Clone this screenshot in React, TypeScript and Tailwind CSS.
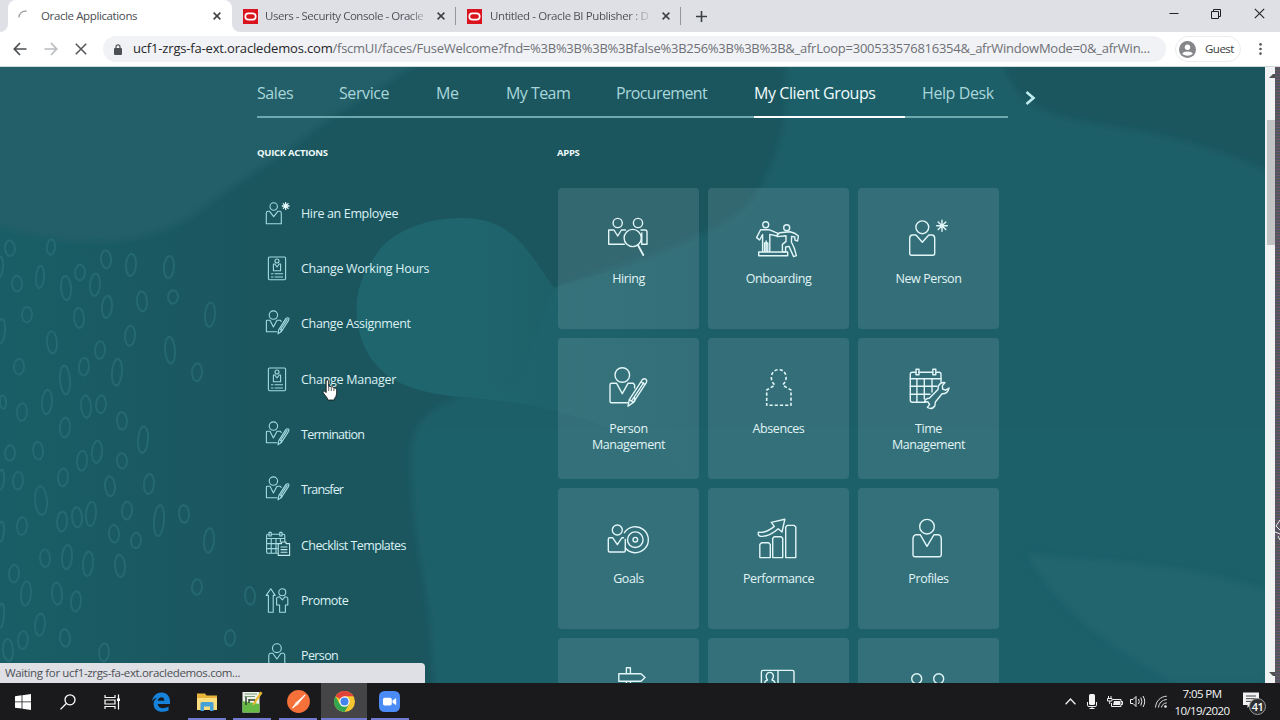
import React from 'react';

type IconProps = { className?: string };

interface QuickAction {
  label: string;
  icon: React.FC;
  tracking: string;
}

interface AppTile {
  lines: string[];
  icon: React.FC;
}

/* ---------- wallpaper ---------- */

// [cx, cy, rx, ry]
const SEEDS: number[][] = [
  [10, 230, 5, 7], [51, 229, 4, 7], [0, 247, 3, 9], [106, 240, 5, 8], [131, 245, 5, 10], [169, 247, 5, 10],
  [17, 262, 5, 7], [40, 256, 4, 10], [80, 252, 5, 7], [66, 266, 5, 11], [95, 263, 5, 10], [173, 274, 5, 6],
  [142, 278, 5, 9], [107, 283, 5, 10], [27, 290, 5, 7], [79, 293, 5, 9], [210, 290, 5, 11], [1, 305, 4, 11],
  [52, 315, 5, 10], [130, 309, 5, 9], [100, 322, 5, 8], [170, 322, 5, 12], [19, 337, 5, 7], [84, 337, 5, 8],
  [65, 349, 5, 13], [117, 342, 5, 12], [197, 342, 5, 8], [3, 369, 3, 6], [47, 369, 5, 11], [22, 378, 5, 8],
  [86, 373, 5, 10], [101, 371, 5, 8], [65, 392, 5, 9], [122, 386, 5, 8], [143, 403, 5, 12], [10, 415, 5, 7],
  [38, 413, 5, 8], [82, 422, 5, 9], [97, 414, 5, 10], [122, 422, 5, 7], [18, 440, 5, 8], [63, 437, 5, 8],
  [110, 445, 5, 9], [149, 443, 5, 9], [1, 439, 3, 9], [41, 458, 6, 13], [127, 467, 5, 8], [62, 477, 5, 9],
  [77, 473, 5, 9], [91, 470, 5, 11], [159, 476, 5, 14], [184, 470, 5, 8], [22, 481, 5, 8], [1, 486, 3, 9],
  [114, 488, 5, 8], [136, 494, 5, 7], [209, 494, 5, 11], [45, 510, 5, 8], [67, 509, 5, 11], [88, 515, 5, 11],
  [120, 517, 5, 10], [14, 524, 5, 8], [26, 542, 5, 11], [57, 542, 5, 10], [76, 549, 5, 9], [197, 536, 5, 7],
  [250, 544, 5, 8], [1, 562, 3, 11], [40, 570, 5, 10], [65, 582, 5, 8], [23, 584, 5, 8], [230, 582, 5, 7],
  [8, 593, 5, 10], [104, 595, 5, 8],
];

const Wallpaper: React.FC = () => (
  <svg className="absolute inset-0 h-full w-full" viewBox="0 67 1265 616" preserveAspectRatio="none" fill="none">
    <defs>
      <linearGradient id="base" x1="0" y1="0" x2="1" y2="0">
        <stop offset="0" stopColor="#195e66" />
        <stop offset="0.2" stopColor="#1b565f" />
        <stop offset="1" stopColor="#1b565f" />
      </linearGradient>
      <linearGradient id="right" x1="0" y1="0" x2="0" y2="1">
        <stop offset="0" stopColor="#1e5e67" />
        <stop offset="1" stopColor="#1f616a" />
      </linearGradient>
      <linearGradient id="bulb" gradientUnits="userSpaceOnUse" x1="480" y1="0" x2="700" y2="0">
        <stop offset="0" stopColor="#1f656d" />
        <stop offset="1" stopColor="#1f656d" stopOpacity="0" />
      </linearGradient>
      <filter id="soft" x="-5%" y="-5%" width="110%" height="110%">
        <feGaussianBlur stdDeviation="3" />
      </filter>
    </defs>
    <rect y="67" width="1265" height="616" fill="url(#base)" />
    <g filter="url(#soft)">
      <path d="M-10 50H430C395 85 350 100 303 139C270 165 240 180 205 207C165 237 125 243 86 242C50 241 20 234 -10 224Z" fill="#205f68" />
      <path
        d="M785 50C790 115 782 165 745 208C700 245 620 262 554 290L520 385L460 397C425 410 411 430 411 455C411 500 416 534 422 570C430 613 434 650 434 700H1290V182C1235 155 1190 138 1100 125C1050 115 1010 110 1000 50Z"
        fill="url(#right)"
      />
    </g>
    <path
      d="M462 218C425 218 390 232 376 255C352 285 352 322 366 350C382 380 410 392 460 397C540 402 620 420 700 480V240C660 262 600 272 554 288C530 255 515 218 462 218Z"
      fill="url(#bulb)"
    />
    <path d="M1027 554C1100 562 1180 562 1265 590V683H1175C1125 655 1060 615 1027 554Z" fill="#21656e" filter="url(#soft)" />
    <g transform="matrix(1 0 0 1.107 0 -6.4)">
      {SEEDS.map(([cx, cy, rx, ry], i) => (
        <ellipse
          key={i}
          cx={cx}
          cy={cy}
          rx={rx}
          ry={ry}
          transform={`rotate(${i % 3 === 0 ? -5 : 5} ${cx} ${cy})`}
          stroke="#2f7780"
          strokeWidth="2"
          opacity="0.5"
        />
      ))}
    </g>
  </svg>
);

/* ---------- app tile icons ---------- */

const TileSvg: React.FC<{ children: React.ReactNode }> = ({ children }) => (
  <svg
    className="h-[49px] w-[49px] shrink-0"
    viewBox="0 0 49 49"
    fill="none"
    stroke="#e2f6f8"
    strokeWidth="1.4"
    strokeLinejoin="round"
    strokeLinecap="round"
  >
    {children}
  </svg>
);

const HiringIcon: React.FC = () => (
  <TileSvg>
    <circle cx="13.7" cy="8" r="4.6" />
    <circle cx="34" cy="8" r="4.6" />
    <path d="M20.3 29.3H4.7V15H10L13.7 21L17.4 15H21.5" />
    <path d="M37 15H41Q43 15 43 17V29.3H37.6M37.8 18V29" />
    <circle cx="28.7" cy="23" r="8.6" />
    <path d="M34 30.3L39.3 40" strokeWidth="1.8" />
  </TileSvg>
);

const OnboardingIcon: React.FC = () => (
  <TileSvg>
    <circle cx="11.7" cy="9.7" r="3" />
    <path d="M8.6 36.5V19.5L5.6 25L2.6 22.6L6.6 14.8H15.6L24 18.4L23 21L15.8 19.4V36.5M12.2 36.5V26M10.6 36.5V28L13.8 28V36.5" />
    <path d="M4.7 37H33.7V40.7H4.7Z" />
    <circle cx="32.7" cy="12.8" r="3" />
    <path d="M23.4 20L25.5 17.8L36 16.8Q41 17.6 44.4 21L43.6 26L41 25.2L40.8 22L37.6 21.4L37.4 27L40.2 33L42.4 40.6L39.6 41.6L35 31.4L31.6 32V36.8H28.4V29.4L32 26.4V20.8L23.4 21.6" />
  </TileSvg>
);

const NewPersonIcon: React.FC = () => (
  <TileSvg>
    <circle cx="18.3" cy="12.3" r="6.4" />
    <path d="M12 20L18.3 27.3L24.8 20H28.5Q30.7 20.5 30.7 23.5V38.5Q30.7 40.3 28.8 40.3H7.6Q5.7 40.3 5.7 38.5V23.5Q5.7 20.5 8 20Z" />
    <path d="M38 5.2V16.2M32.6 10.7H43.4M34.2 6.9L41.8 14.5M41.8 6.9L34.2 14.5" />
  </TileSvg>
);

const PersonManagementIcon: React.FC = () => (
  <TileSvg>
    <circle cx="18.3" cy="10" r="7.3" />
    <path d="M23.5 37.7H7.2Q6 37.7 6 36.2V20Q6 18.3 7.6 18.3H12.6L18.3 28.7L24 18.3H29.4L30.6 20V23M30.6 32.5V36.5L28.6 37.7" />
    <path d="M24 41.3L25.3 34.6L38.4 14.6Q40.4 13 42.2 14.5Q43.3 16 42.3 17.6L29.4 37.4ZM25.3 34.6L29.4 37.4M36.9 16.8L41 19.6M27.6 35.8L39.6 17.8" />
  </TileSvg>
);

const AbsencesIcon: React.FC = () => (
  <TileSvg>
    <path
      d="M20.5 19.6C15.4 15.5 16.2 4.7 24.7 4.7S34 15.5 28.9 19.6L30 21L37 25V40.3H12.7V25L19.5 21Z"
      strokeDasharray="3.2 2"
      strokeLinecap="butt"
      strokeWidth="1.6"
    />
  </TileSvg>
);

const TimeManagementIcon: React.FC = () => (
  <TileSvg>
    <path d="M12 7.3H8.3Q6.3 7.3 6.3 9.3V35.3Q6.3 37.3 8.3 37.3H21.5M15 7.3H28.7M32 7.3H35Q37 7.3 37 9.3V17" />
    <path d="M12 4.2H15V9.8H12ZM28.8 4.2H31.8V9.8H28.8ZM6.3 13.7H37M6.3 21.3H33M6.3 29.3H26M12.9 13.7V37.3M20.3 13.7V34M28 13.7V27" />
    <path d="M41 17.6Q36 17 34.3 21.5L34 24.5L25.3 33.3Q21.6 33.2 20.6 36.5L24 37L25.6 39.4L23.4 42.4Q28 45 30.8 41L31.4 37L38 28.8Q43.8 29 45 23L41.6 25.2L38.6 24L38.4 20.6Z" />
  </TileSvg>
);

const GoalsIcon: React.FC = () => (
  <TileSvg>
    <circle cx="13.3" cy="15" r="5" />
    <path d="M21.3 24.5V35.5Q21.3 37 20 37H5.8Q4.3 37 4.3 35.5V24.2Q4.3 22.7 5.8 22.7H8.6L13.3 29.7L18 22.7H19.6" />
    <path d="M20.4 17.7A13 13 0 1 1 21.3 33" />
    <circle cx="31.3" cy="24.7" r="7.8" />
    <circle cx="31.3" cy="24.7" r="2.3" />
  </TileSvg>
);

const PerformanceIcon: React.FC = () => (
  <TileSvg>
    <path d="M5.8 42.6V29.5L7.5 27.7H14.6L16.3 29.5V42.6ZM18.7 42.6V23.2L20.2 21.7H27.2L28.7 23.2V42.6ZM31.7 42.6V12L33.2 10.4H40.2L41.8 12V42.6Z" />
    <path d="M4.5 17.2C10 18 16 15 20.3 11.4L17.3 7.4L30.8 4.3L28 17L24.2 13.7C18 19.5 12 21.4 6.6 21.4Q3.4 20.5 4.5 17.2Z" />
  </TileSvg>
);

const ProfilesIcon: React.FC = () => (
  <TileSvg>
    <circle cx="23" cy="11.7" r="7.3" />
    <path d="M16.2 19.7L23 31.3L30 19.7H34.5Q37.3 20.5 37.3 24V40Q37.3 41.7 35.5 41.7H10.8Q9 41.7 9 40V24Q9 20.5 11.8 19.7Z" />
  </TileSvg>
);

const SignpostIcon: React.FC = () => (
  <TileSvg>
    <path d="M22.4 8.7V2.8H26.4V8.7M14.8 8.7H37L41 12.5L37 16.3H14.8ZM22.4 16.3V22M26.4 16.3V22" />
  </TileSvg>
);

const IdCardIcon: React.FC = () => (
  <TileSvg>
    <path d="M9 5.4H38.3Q40 5.4 40 7V34H7.4V7Q7.4 5.4 9 5.4ZM24 5.4V34" />
    <path d="M13.5 15C11 11.5 12.4 7.4 15.8 7.4S20.6 11.5 18 15Q21.4 16 21.4 20H10.2Q10.2 16 13.5 15Z" />
  </TileSvg>
);

const PeopleIcon: React.FC = () => (
  <TileSvg>
    <circle cx="12.7" cy="13.7" r="5" />
    <circle cx="34.7" cy="13.7" r="5" />
  </TileSvg>
);

/* ---------- quick action icons ---------- */

const ActionSvg: React.FC<{ children: React.ReactNode }> = ({ children }) => (
  <svg
    className="h-7 w-7 shrink-0"
    viewBox="0 0 28 28"
    fill="none"
    stroke="#a5d9e0"
    strokeWidth="1.1"
    strokeLinejoin="round"
    strokeLinecap="round"
  >
    {children}
  </svg>
);

const HireIcon: React.FC = () => (
  <ActionSvg>
    <circle cx="9.7" cy="6.5" r="3.7" />
    <path d="M5.6 11.3L9.7 16.7L13.8 11.3H16Q17.3 11.6 17.3 13.2V23.7H2.3V13.2Q2.3 11.6 3.6 11.3Z" />
    <path d="M21.7 2.6V9.4M18.3 6H25.1M19.3 3.6L24.1 8.4M24.1 3.6L19.3 8.4" stroke="#e4f7f9" strokeWidth="1.3" />
  </ActionSvg>
);

const BadgeIcon: React.FC = () => (
  <ActionSvg>
    <rect x="4.4" y="2" width="17.2" height="22.7" rx="1.2" />
    <circle cx="13" cy="6" r="2" />
    <path d="M10.8 9H9.4V15.7H16.6V9H15.2L13 12ZM7.4 18.8H9M11 18.8H18.6M7.4 22H9M11 22H18.6" />
  </ActionSvg>
);

const AssignIcon: React.FC = () => (
  <ActionSvg>
    <circle cx="9.4" cy="5.1" r="4.2" />
    <path d="M13 21.7H2.4V11Q2.4 10.2 3.2 10.2H6L9.4 17L13 10.2H16.4L17.2 11.5M17.4 19.5V21.4L16.6 21.7" />
    <path d="M14 23.8L14.8 19.6L22 8.4Q24 7 24.9 8.6Q25 9.6 24.4 10.6L17.3 21.6ZM16.4 19.8L23.2 9.4" />
  </ActionSvg>
);

const ChecklistIcon: React.FC = () => (
  <ActionSvg>
    <path d="M13.4 22.3H4Q2.6 22.3 2.6 21V4.5Q2.6 3.3 4 3.3H5M7.2 3.3H15.8M18 3.3H19.6Q20.8 3.3 20.8 4.5V10.5M2.6 7.5H20.8M2.6 12.6H14M2.6 17.6H13.4M7.2 7.5V22.3M12 7.5V22.3M16.4 7.5V11" />
    <path d="M5 1.4H7.2V5H5ZM15.8 1.4H18V5H15.8Z" />
    <path d="M14.2 12.6H17.6V11H22V12.6H25.6V24.4H14.2ZM17 16H23M17 18.6H23M17 21.2H23" stroke="#c4e9ed" />
  </ActionSvg>
);

const PromoteIcon: React.FC = () => (
  <ActionSvg>
    <path d="M4.4 25.2V8.4H2.2L6.8 1.8L11.2 8.4H9.2V25.2Z" />
    <circle cx="18.3" cy="5.3" r="3.5" />
    <path d="M15.6 25.2V18H12.6V11Q13 9.8 15.6 9.8L18.3 12.8L21 9.8Q23.6 9.8 23.8 11V18H21.4V25.2Z" />
  </ActionSvg>
);

const PersonIcon: React.FC = () => (
  <ActionSvg>
    <circle cx="12.9" cy="6.2" r="4.4" />
    <path d="M8.8 11.2L12.9 17L17 11.2H19.3Q20.8 11.6 20.8 13.4V26H4.8V13.4Q4.8 11.6 6.3 11.2Z" />
  </ActionSvg>
);

/* ---------- data ---------- */

const NAV = [
  { label: 'Sales', cls: 'w-[36px] tracking-[-0.4px]' },
  { label: 'Service', cls: 'w-[51px] tracking-[-0.4px]' },
  { label: 'Me', cls: 'w-[24px] tracking-[-0.35px]' },
  { label: 'My Team', cls: 'w-[64px] tracking-[-0.55px]' },
  { label: 'Procurement', cls: 'w-[92px] tracking-[-0.65px]' },
  { label: 'My Client Groups', cls: 'w-[122px] tracking-[-0.43px] text-[#f0fbfc]' },
  { label: 'Help Desk', cls: 'w-[73px] tracking-[-0.4px]' },
];

const QUICK_ACTIONS: QuickAction[] = [
  { label: 'Hire an Employee', icon: HireIcon, tracking: 'tracking-[-0.35px]' },
  { label: 'Change Working Hours', icon: BadgeIcon, tracking: 'tracking-[-0.3px]' },
  { label: 'Change Assignment', icon: AssignIcon, tracking: 'tracking-[-0.33px]' },
  { label: 'Change Manager', icon: BadgeIcon, tracking: 'tracking-[-0.27px]' },
  { label: 'Termination', icon: AssignIcon, tracking: 'tracking-[-0.72px]' },
  { label: 'Transfer', icon: AssignIcon, tracking: 'tracking-[-0.85px]' },
  { label: 'Checklist Templates', icon: ChecklistIcon, tracking: 'tracking-[-0.57px]' },
  { label: 'Promote', icon: PromoteIcon, tracking: 'tracking-[-0.5px]' },
  { label: 'Person', icon: PersonIcon, tracking: 'tracking-[-0.6px]' },
];

const APPS: AppTile[] = [
  { lines: ['Hiring'], icon: HiringIcon },
  { lines: ['Onboarding'], icon: OnboardingIcon },
  { lines: ['New Person'], icon: NewPersonIcon },
  { lines: ['Person', 'Management'], icon: PersonManagementIcon },
  { lines: ['Absences'], icon: AbsencesIcon },
  { lines: ['Time', 'Management'], icon: TimeManagementIcon },
  { lines: ['Goals'], icon: GoalsIcon },
  { lines: ['Performance'], icon: PerformanceIcon },
  { lines: ['Profiles'], icon: ProfilesIcon },
  { lines: [], icon: SignpostIcon },
  { lines: [], icon: IdCardIcon },
  { lines: [], icon: PeopleIcon },
];

/* ---------- browser chrome ---------- */

const CloseGlyph: React.FC<IconProps> = ({ className }) => (
  <svg className={className} viewBox="0 0 8 8" stroke="#3c4043" strokeWidth="1.5">
    <path d="M0.6 0.6L7.4 7.4M7.4 0.6L0.6 7.4" />
  </svg>
);

const OracleFavicon: React.FC = () => (
  <svg className="h-[15px] w-[15px] shrink-0" viewBox="0 0 15 15">
    <rect width="15" height="15" fill="#d9141e" />
    <rect x="2.3" y="4.4" width="10.4" height="6.2" rx="3.1" fill="none" stroke="#fff" strokeWidth="1.7" />
  </svg>
);

const TabStrip: React.FC = () => (
  <div className="flex h-8 shrink-0 items-stretch bg-[#dee0e5] text-[11.5px] text-[#4a4d52]">
    <div className="flex w-2 items-end bg-white">
      <div className="h-full w-2 rounded-br-lg bg-[#dee0e5]" />
    </div>
    <div className="flex w-[224px] items-center rounded-t-lg bg-white pl-[10px]">
      <svg className="h-3 w-3 shrink-0" viewBox="0 0 12 12" fill="none" stroke="#9a9da2" strokeWidth="1.3">
        <path d="M1 7.5C1 3.5 4 1 8.5 1" />
      </svg>
      <span className="ml-[11px] w-[172px] shrink-0 whitespace-nowrap tracking-[-0.38px]">Oracle Applications</span>
      <CloseGlyph className="h-2 w-2 shrink-0" />
    </div>
    <div className="bg-white">
      <div className="h-full w-2 rounded-bl-lg bg-[#dee0e5]" />
    </div>
    <div className="flex items-center pl-[3px]">
      <OracleFavicon />
      <div className="ml-[7px] w-[164px] whitespace-nowrap bg-linear-to-r from-[#4a4d52] from-88% to-[#dee0e5] bg-clip-text tracking-[-0.46px] text-transparent">
        Users - Security Console - Oracle
      </div>
      <CloseGlyph className="ml-[8px] h-2 w-2" />
      <div className="ml-[10px] h-[18px] w-px bg-[#93969b]" />
    </div>
    <div className="flex items-center pl-[11px]">
      <OracleFavicon />
      <div className="ml-[8px] w-[163px] whitespace-nowrap bg-linear-to-r from-[#4a4d52] from-85% to-[#dee0e5] bg-clip-text tracking-[-0.4px] text-transparent">
        Untitled - Oracle BI Publisher : D
      </div>
      <CloseGlyph className="ml-[9px] h-2 w-2" />
      <div className="ml-[10px] h-[18px] w-px bg-[#93969b]" />
    </div>
    <div className="flex items-center pl-[15px]">
      <svg className="h-[11px] w-[11px]" viewBox="0 0 11 11" stroke="#3c4043" strokeWidth="1.6">
        <path d="M5.5 0V11M0 5.5H11" />
      </svg>
    </div>
    <div className="ml-auto flex items-start gap-[32px] pt-2 pr-[15px]">
      <svg className="h-3 w-[10px]" viewBox="0 0 10 12" stroke="#222">
        <path d="M0.5 5.5H9.5" />
      </svg>
      <svg className="h-3 w-[11px]" viewBox="0 0 11 12" fill="none" stroke="#222">
        <path d="M0.5 3.5H7.5V10.5H0.5ZM2.5 3.5V1.5H9.5V8.5H7.5" />
      </svg>
      <svg className="h-3 w-[11px]" viewBox="0 0 11 12" stroke="#222" strokeWidth="1.1">
        <path d="M0.8 0.8L10.2 10.2M10.2 0.8L0.8 10.2" />
      </svg>
    </div>
  </div>
);

const Toolbar: React.FC = () => (
  <div className="flex h-[35px] shrink-0 items-center border-b border-[#cfd8da] bg-white pl-[13px]">
    <svg className="h-[14px] w-[14px]" viewBox="0 0 14 14" fill="none" stroke="#4b4e52" strokeWidth="1.7">
      <path d="M13.5 7H1.5M7 1L1.3 7L7 13" />
    </svg>
    <svg className="ml-[17px] h-[14px] w-[14px]" viewBox="0 0 14 14" fill="none" stroke="#b9bbbe" strokeWidth="1.7">
      <path d="M0.5 7H12.5M7 1L12.7 7L7 13" />
    </svg>
    <svg className="ml-[17px] h-[12px] w-[12px]" viewBox="0 0 12 12" stroke="#55585c" strokeWidth="1.6">
      <path d="M0.8 0.8L11.2 11.2M11.2 0.8L0.8 11.2" />
    </svg>
    <div className="ml-4 flex h-[26px] w-[1063px] items-center rounded-full bg-[#f1f2f5] pl-[11px]">
      <svg className="h-[11px] w-2 shrink-0" viewBox="0 0 8 11">
        <rect y="4" width="8" height="7" rx="1" fill="#4d5054" />
        <path d="M2 4.5V2.8A2 2 0 0 1 6 2.8V4.5" fill="none" stroke="#4d5054" strokeWidth="1.2" />
      </svg>
      <div className="ml-[11px] whitespace-nowrap text-[13px] tracking-[-0.25px] text-[#6d7075]">
        <span className="tracking-[-0.17px] text-[#26282b]">ucf1-zrgs-fa-ext.oracledemos.com</span>
        /fscmUI/faces/FuseWelcome?fnd=%3B%3B%3B%3Bfalse%3B256%3B%3B%3B&amp;_afrLoop=300533576816354&amp;_afrWindowMode=0&amp;_afrWin...
      </div>
    </div>
    <div className="ml-[9px] flex h-[26px] w-[66px] items-center rounded-full border border-[#ececef] pl-[3px]">
      <svg className="h-[17px] w-[17px] shrink-0" viewBox="0 0 17 17">
        <circle cx="8.5" cy="8.5" r="8.5" fill="#85878b" />
        <circle cx="8.5" cy="6.2" r="2.7" fill="#fff" />
        <path d="M3.2 12.6C4.5 9.8 12.5 9.8 13.8 12.6C12 15.4 5 15.4 3.2 12.6Z" fill="#fff" />
      </svg>
      <span className="ml-[9px] text-[11.5px] tracking-[-0.5px] text-[#3a3d40]">Guest</span>
    </div>
    <svg className="ml-[18px] h-3 w-[3px]" viewBox="0 0 3 12" fill="#55585c">
      <circle cx="1.5" cy="1.4" r="1.3" />
      <circle cx="1.5" cy="6" r="1.3" />
      <circle cx="1.5" cy="10.6" r="1.3" />
    </svg>
  </div>
);

const Scrollbar: React.FC = () => (
  <div className="flex h-full w-[15px] shrink-0">
    <div className="flex w-[10px] flex-col items-end bg-[#f0f1f3]">
      <svg className="mt-[7px] h-1 w-[6px]" viewBox="0 0 6 4" fill="#505050">
        <path d="M0 4L4 0H6V4Z" />
      </svg>
      <div className="mt-[42px] h-[125px] w-2 bg-[#c1c2c4]" />
      <svg className="mt-auto mb-[7px] h-1 w-[6px]" viewBox="0 0 6 4" fill="#505050">
        <path d="M0 0H6V4H4Z" />
      </svg>
    </div>
    <div className="flex w-[5px] items-start bg-[repeating-linear-gradient(180deg,#6b5566_0_1px,#4a5a4e_1px_2px,#55506c_2px_3px)]">
      <svg className="mt-[451px] h-6 w-[5px]" viewBox="0 0 5 24" fill="none" stroke="#eee">
        <path d="M5 2L1 8L5 12M0 14L5 16M3 18L5 22" />
      </svg>
    </div>
  </div>
);

/* ---------- taskbar ---------- */

const TaskbarCell: React.FC<{ children: React.ReactNode; state?: 'open' | 'active' }> = ({ children, state }) => (
  <div
    className={`flex h-full w-[45.8px] flex-col items-center ${state === 'active' ? 'bg-[#454547]' : ''}`}
  >
    <div className="flex h-[35px] items-center justify-center pt-[2px]">{children}</div>
    {state && <div className={`h-[2px] bg-[#737bd0] ${state === 'active' ? 'w-full' : 'w-[38px]'}`} />}
  </div>
);

const Taskbar: React.FC = () => (
  <div className="flex h-[37px] shrink-0 bg-[#1a1a1d] text-white">
    <div className="flex w-[138px] items-center">
      <svg className="ml-[15px] h-4 w-4" viewBox="0 0 16 16" fill="#fff">
        <path d="M0 2.2L6.6 1.3V7.5H0ZM7.4 1.2L16 0V7.5H7.4ZM0 8.3H6.6V14.6L0 13.7ZM7.4 8.3H16V16L7.4 14.7Z" />
      </svg>
      <svg className="ml-[29px] h-4 w-4" viewBox="0 0 16 16" fill="none" stroke="#fff" strokeWidth="1.3">
        <circle cx="10" cy="5.8" r="5" />
        <path d="M6.3 9.5L0.5 15.4" />
      </svg>
      <svg className="ml-[28px] h-4 w-[17px]" viewBox="0 0 17 16" fill="none" stroke="#fff" strokeWidth="1.2">
        <path d="M1 1V3.5H11V1M1 6H11V10H1ZM1 15V12.5H11V15M14.5 0.5V15.5" />
        <path d="M13 4.5H16V7H13Z" fill="#fff" stroke="none" />
      </svg>
    </div>
    <TaskbarCell>
      <svg className="h-5 w-5" viewBox="0 0 20 20">
        <path
          d="M1 9.2C2 3.6 5.8 0.6 10.6 0.6C16 0.6 19 4.6 19 9.6V12H6.7C7 16.6 13 17.3 17.5 14.6V18.4C10.5 21.6 2.6 19.4 2.6 12C2.6 9.2 4.2 7 6.4 5.8C4.2 6 2.2 7.2 1 9.2ZM6.8 8.7H13.4C13.4 3.8 7.5 4.2 6.8 8.7Z"
          fill="#1582dc"
        />
      </svg>
    </TaskbarCell>
    <TaskbarCell state="open">
      <svg className="h-[18px] w-5" viewBox="0 0 20 18">
        <path d="M0 0.5H8L9.6 2.5H20V17H0Z" fill="#e7b53c" />
        <path d="M0 5H20V17H0Z" fill="#fadd7c" />
        <path d="M3.5 18V10.5Q3.5 9 5 9H15Q16.5 9 16.5 10.5V18H13V13.5H7V18Z" fill="#47a1d8" />
      </svg>
    </TaskbarCell>
    <TaskbarCell state="open">
      <svg className="h-[22px] w-[21px]" viewBox="0 0 21 22">
        <rect x="0.5" y="1" width="17" height="20.5" fill="#eef3ea" />
        <path d="M0.5 10L17.5 13V21.5H0.5Z" fill="#67ba45" />
        <path d="M2.5 3H15M2.5 5.5H13" stroke="#7b9a77" />
        <path d="M4 14V6M7 12V8M7 9H13V12" stroke="#2c3b2b" strokeWidth="1.4" fill="none" />
        <path d="M18.6 0.6L20.5 2L12.5 13.6L10.6 14.6L11 12Z" fill="#eab92c" />
      </svg>
    </TaskbarCell>
    <TaskbarCell state="open">
      <svg className="h-[23px] w-[23px]" viewBox="0 0 23 23">
        <circle cx="11.5" cy="11.5" r="11.4" fill="#f6703a" />
        <path d="M18.5 4.5L8.5 12.5L6 17.5L11 14.8Z" fill="#ffd8c6" />
        <path d="M18 5L5.5 18" stroke="#fff" strokeWidth="1.2" />
      </svg>
    </TaskbarCell>
    <TaskbarCell state="active">
      <svg className="h-[21px] w-[21px]" viewBox="0 0 20 20">
        <circle cx="10" cy="10" r="10" fill="#f8c630" />
        <path d="M10 10L1.34 5A10 10 0 0 1 18.66 5H10Z" fill="#e0433a" />
        <path d="M1.34 5A10 10 0 0 0 10 20L14.3 12.5L10 10L5.6 12.5Z" fill="#32a650" />
        <circle cx="10" cy="10" r="4.9" fill="#fff" />
        <circle cx="10" cy="10" r="3.8" fill="#4384ee" />
      </svg>
    </TaskbarCell>
    <TaskbarCell state="open">
      <svg className="h-[21px] w-[21px]" viewBox="0 0 21 21">
        <rect width="21" height="21" rx="5.5" fill="#4a8bf5" />
        <rect x="4" y="6.8" width="8.8" height="7.6" rx="1.6" fill="#fff" />
        <path d="M13.5 9.5L17.2 7V14.2L13.5 11.8Z" fill="#fff" />
      </svg>
    </TaskbarCell>
    <div className="ml-auto flex items-center">
      <svg className="h-[7px] w-[11px]" viewBox="0 0 11 7" fill="none" stroke="#eee" strokeWidth="1.3">
        <path d="M0.6 6.2L5.5 1L10.4 6.2" />
      </svg>
      <svg className="ml-[11px] h-[15px] w-[10px]" viewBox="0 0 10 15" fill="none" stroke="#eee">
        <rect x="2" y="0" width="6" height="11" rx="1.5" fill="#f4f4f4" stroke="none" />
        <path d="M0.5 8V11.5Q0.5 12.5 2 12.5H8Q9.5 12.5 9.5 11.5V8M5 12.5V14.5M2.5 14.5H7.5" />
      </svg>
      <svg className="ml-[10px] h-[12px] w-[16px]" viewBox="0 0 16 12" fill="none" stroke="#eee">
        <path d="M5.5 3.5H14V10.5H4.5V7M14 5.5H15.5V8.5H14" />
        <path d="M7 5H13V9H6Z" fill="#eee" stroke="none" />
        <path d="M1.5 0V2.5M4 0V2.5M0.5 2.5H5V5H0.5ZM2.7 5V8" />
      </svg>
      <svg className="ml-[7px] h-[13px] w-[16px]" viewBox="0 0 16 13" fill="none" stroke="#eee">
        <path d="M0.5 4.5H3L6 1.5V11.5L3 8.5H0.5ZM8.5 4Q10 6.5 8.5 9M10.8 2.5Q13 6.5 10.8 10.5M13 1Q16.4 6.5 13 12" />
      </svg>
      <svg className="ml-[9px] h-[13px] w-[12px]" viewBox="0 0 12 13" fill="none" stroke="#ddd">
        <path d="M0.5 12.5C1 6 5.5 1.5 11.8 1.2M3.5 12.5C4 8 7 5 11.8 4.5M6.5 12.5C7 10 8.5 8.2 11.8 7.8" />
        <circle cx="10.5" cy="11.5" r="1.3" fill="#eee" stroke="none" />
      </svg>
      <div className="ml-[3px] w-[64px] text-center text-[11.5px] leading-[17px] tracking-[-0.6px] text-[#f4f4f4]">
        <div>7:05 PM</div>
        <div>10/19/2020</div>
      </div>
      <div className="relative mr-[14px] ml-[9px] h-5 w-[23px]">
        <svg className="h-4 w-4" viewBox="0 0 16 16">
          <path d="M0 0.5H16V13H7L4.5 16V13H0Z" fill="#f2f2f2" />
          <path d="M3 4H13M3 6.7H13M3 9.4H10" stroke="#444" />
        </svg>
        <div className="absolute top-[6px] left-[6px] flex h-[17px] w-[17px] items-center justify-center rounded-full border border-[#9b9b9b] bg-[#2e2e30] text-[11px] font-semibold leading-none tracking-[-0.6px]">
          41
        </div>
      </div>
    </div>
  </div>
);

/* ---------- page ---------- */

const Springboard: React.FC = () => (
  <main className="relative min-w-0 flex-1 overflow-hidden">
    <Wallpaper />
    <div className="relative ml-[257px] w-[751px]">
      <div className="relative">
        <nav className="flex h-[51px] gap-[46px] border-b-2 border-[#6ea9b0] pt-[14px] text-[16px] leading-6 text-[#a9d6da]">
          {NAV.map(item => (
            <div key={item.label} className={`shrink-0 whitespace-nowrap ${item.cls}`}>
              {item.label}
            </div>
          ))}
        </nav>
        <div className="-mt-[2px] ml-[497px] h-[2px] w-[151px] bg-white" />
        <svg
          className="absolute top-[24px] left-[768px] h-[14px] w-[11px]"
          viewBox="0 0 11 14"
          fill="none"
          stroke="#bfecef"
          strokeWidth="2.6"
        >
          <path d="M1.5 1L8.5 7L1.5 13" />
        </svg>
      </div>

      <div className="relative mt-[2px] flex">
        <section className="w-[300px]">
          <h2 className="mt-[25px] text-[9.5px] font-bold leading-4 tracking-[-0.3px] text-[#eefafa]">QUICK ACTIONS</h2>
          <ul className="mt-[25px]">
            {QUICK_ACTIONS.map(({ label, icon: Icon, tracking }) => (
              <li key={label} className="flex h-[55.3px] items-center gap-[9px] pl-[7px]">
                <Icon />
                <span className={`mt-px whitespace-nowrap text-[12.5px] text-[#dcf1f3] ${tracking}`}>{label}</span>
              </li>
            ))}
          </ul>
        </section>

        <section>
          <h2 className="mt-[25px] text-[9.5px] font-bold leading-4 tracking-[-0.3px] text-[#eefafa]">APPS</h2>
          <div className="mt-[27px] ml-px grid grid-cols-[repeat(3,141px)] gap-[9px]">
            {APPS.map(({ lines, icon: Icon }, i) => (
              <div key={i} className="flex h-[141px] flex-col items-center rounded-[4px] bg-[#a8bfc8]/18 pt-[27px]">
                <Icon />
                <div className="mt-[7px] text-center text-[12.5px] leading-4 tracking-[-0.42px] text-[#e0f4f5]">
                  {lines.map(line => (
                    <div key={line}>{line}</div>
                  ))}
                </div>
              </div>
            ))}
          </div>
        </section>
      </div>
    </div>

    <div className="absolute bottom-0 left-0 h-5 w-[425px] rounded-tr-[4px] bg-[#dfe0e5] pl-[5px] text-[11.5px] leading-5 tracking-[-0.36px] text-[#4d5055]">
      Waiting for ucf1-zrgs-fa-ext.oracledemos.com...
    </div>

    <svg className="absolute top-[312px] left-[322px] h-[22px] w-[16px]" viewBox="0 0 16 22">
      <path
        d="M4.2 1.5Q5.6 0.2 6.6 1.7V7.6L8 7.2L9.4 8L11 7.8L12 9L13.6 9.2Q14.8 10 14.6 11.5V15Q14 18 12.4 19.6V21H5.6V19.6L1.2 13.8Q0.6 11.6 2.6 12.2L4.2 13.6Z"
        fill="#fff"
        stroke="#111"
        strokeWidth="0.8"
      />
      <path d="M6.7 8V12M9.3 8.4V12M11.9 9.2V12" stroke="#333" strokeWidth="0.8" />
    </svg>
  </main>
);

export default function App() {
  return (
    <div className="flex h-[720px] w-[1280px] flex-col overflow-hidden bg-white font-['Open_Sans','Noto_Sans',sans-serif]">
      <TabStrip />
      <Toolbar />
      <div className="flex min-h-0 flex-1">
        <Springboard />
        <Scrollbar />
      </div>
      <Taskbar />
    </div>
  );
}
